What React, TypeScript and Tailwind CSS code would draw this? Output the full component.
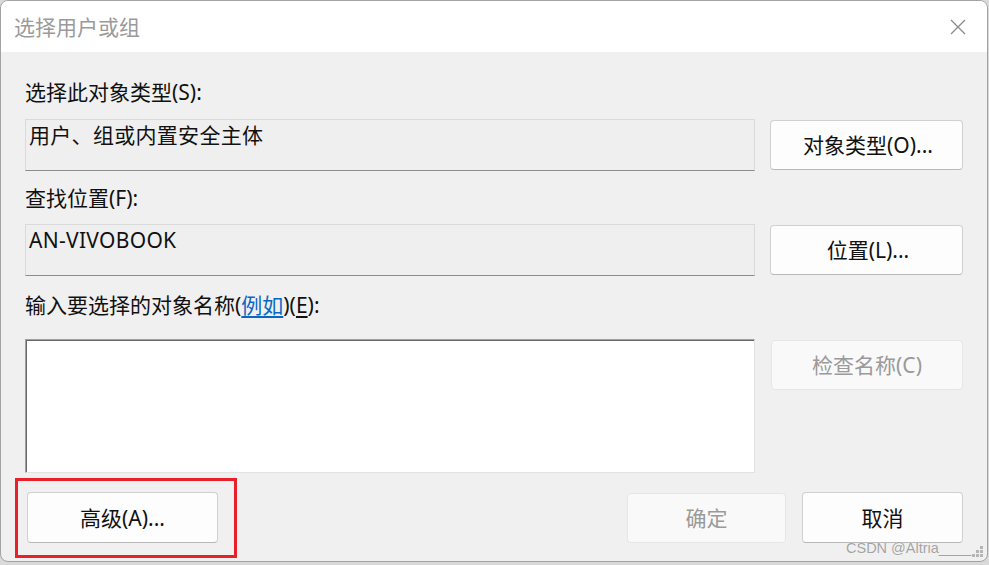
import React from "react";

const font = "font-['Noto_Sans','Noto_Sans_CJK_SC',sans-serif]";

function Btn({ children, disabled, className = "" }: { children: React.ReactNode; disabled?: boolean; className?: string }) {
  return (
    <button
      className={
        "flex items-center justify-center rounded-[4px] border text-[21px] leading-[28px] " +
        (disabled
          ? "border-[#e6e6e6] bg-[#f9f9f9] text-[#9a9a9a]"
          : "border-[#d0d0d0] border-b-[#b8b8b8] bg-[#fdfdfd] text-[#111]") +
        " " +
        className
      }
    >
      {children}
    </button>
  );
}

function ReadField({ children }: { children: React.ReactNode }) {
  return (
    <div className="h-[52px] w-[730px] border border-[#dadada] border-b-[#8c8c8c] bg-[#efefef] pl-[3px] pt-[1px] text-[21px] leading-[28px] tracking-[0.3px] text-[#111]">
      {children}
    </div>
  );
}

export default function App() {
  return (
    <div className={"h-[565px] w-[989px] bg-[#d9d9d9] " + font}>
      <div className="relative flex h-[562px] w-[988px] flex-col overflow-hidden rounded-[8px] border border-[#a3a3a3] bg-[#f0f0f0]">
        {/* Title bar */}
        <div className="flex h-[51px] items-center justify-between bg-white pl-[13px] pr-[21px]">
          <span className="text-[21px] leading-[28px] text-[#9a9a9a]">选择用户或组</span>
          <svg width="16" height="16" viewBox="0 0 16 16" className="text-[#8a8a8a]">
            <path d="M1 1L15 15M15 1L1 15" stroke="currentColor" strokeWidth="1.3" fill="none" />
          </svg>
        </div>

        {/* Body */}
        <div className="flex flex-col px-[24px] pt-[26px] text-[#111]">
          <div className="h-[28px] text-[21px] leading-[28px]">选择此对象类型(S):</div>
          <div className="mt-[13px] flex gap-[15px]">
            <ReadField>用户、组或内置安全主体</ReadField>
            <Btn className="mt-[1px] h-[50px] w-[193px] pl-[3px]">对象类型(O)...</Btn>
          </div>

          <div className="mt-[13px] h-[28px] text-[21px] leading-[28px]">查找位置(F):</div>
          <div className="mt-[12px] flex gap-[15px]">
            <ReadField>AN-VIVOBOOK</ReadField>
            <Btn className="mt-[1px] h-[50px] w-[193px] pl-[3px]">位置(L)...</Btn>
          </div>

          <div className="mt-[15px] h-[28px] text-[21px] leading-[28px]">
            输入要选择的对象名称(<span className="text-[#0b66c2] underline underline-offset-[3px]">例如</span>)(<span className="underline underline-offset-[3px]">E</span>):
          </div>
          <div className="mt-[20px] flex gap-[16px]">
            <div className="h-[134px] w-[730px] border border-t-[#a0a0a0] border-l-[#a0a0a0] border-r-[#e2e2e2] border-b-[#e2e2e2] bg-white shadow-[inset_1px_1px_0_#696969]" />
            <Btn disabled className="mt-[1px] h-[50px] w-[192px]">检查名称(C)</Btn>
          </div>

          <div className="mt-[19px] flex items-start justify-between">
            <Btn className="ml-[2px] h-[51px] w-[191px]">高级(A)...</Btn>
            <div className="flex gap-[16px]">
              <Btn disabled className="mt-[1px] h-[50px] w-[159px]">确定</Btn>
              <Btn className="h-[51px] w-[161px]">取消</Btn>
            </div>
          </div>
        </div>

        {/* Annotation around the advanced button */}
        <div className="pointer-events-none absolute left-[14px] top-[477px] h-[80px] w-[222px] border-[3px] border-[#e8202a]" />

        {/* Watermark */}
        <div className="pointer-events-none absolute left-[845px] top-[539px] font-['Liberation_Sans',sans-serif] text-[14.5px] leading-[16px] text-[#a3a3a3] [text-shadow:0_0_1px_#fff]">
          CSDN @Altria____
        </div>

        {/* Resize grip */}
        <svg width="12" height="12" viewBox="0 0 12 12" className="absolute left-[971px] top-[545px]">
          <rect x="8" y="0" width="3" height="3" fill="#b5b5b5" />
          <rect x="4" y="4" width="3" height="3" fill="#b5b5b5" />
          <rect x="8" y="4" width="3" height="3" fill="#b5b5b5" />
          <rect x="0" y="8" width="3" height="3" fill="#b5b5b5" />
          <rect x="4" y="8" width="3" height="3" fill="#b5b5b5" />
          <rect x="8" y="8" width="3" height="3" fill="#b5b5b5" />
        </svg>
      </div>
    </div>
  );
}
